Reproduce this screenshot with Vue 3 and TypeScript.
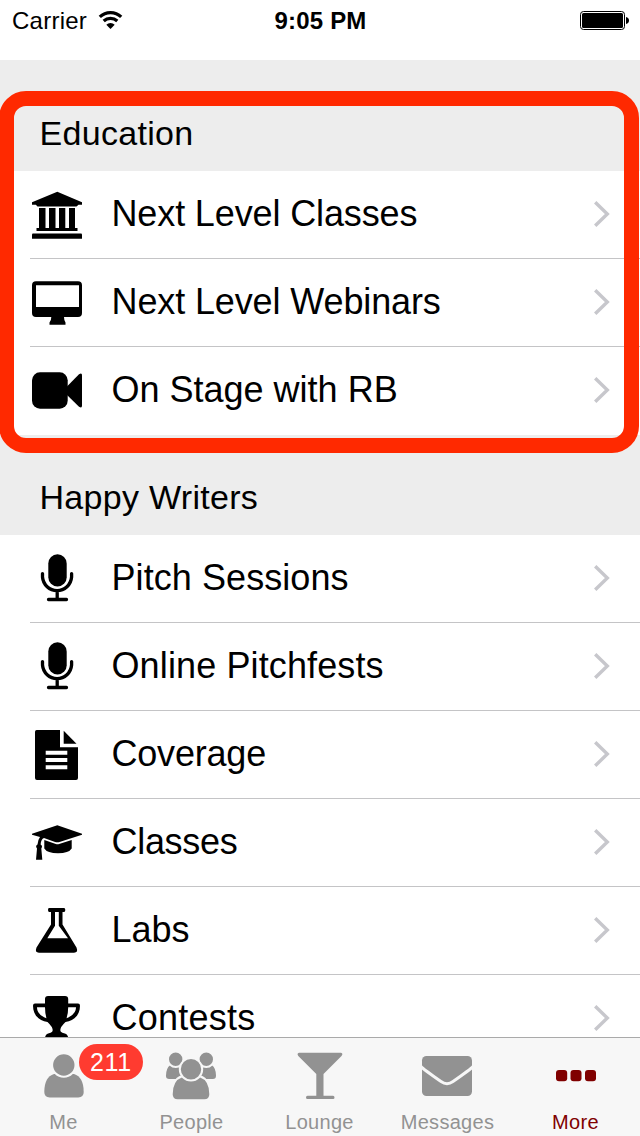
<script setup lang="ts">
interface Row { label: string; icon: string; tracking: number }
interface Section { title: string; kind: string; rows: Row[] }
interface Tab { label: string; icon: string; badge?: string; active?: boolean }

const sections: Section[] = [
  {
    title: 'Education',
    kind: 'first',
    rows: [
      { label: 'Next Level Classes', icon: 'bank', tracking: -0.13 },
      { label: 'Next Level Webinars', icon: 'monitor', tracking: -0.12 },
      { label: 'On Stage with RB', icon: 'camera', tracking: 0 },
    ],
  },
  {
    title: 'Happy Writers',
    kind: 'second',
    rows: [
      { label: 'Pitch Sessions', icon: 'mic', tracking: 0.07 },
      { label: 'Online Pitchfests', icon: 'mic', tracking: 0.12 },
      { label: 'Coverage', icon: 'doc', tracking: -0.2 },
      { label: 'Classes', icon: 'cap', tracking: -0.3 },
      { label: 'Labs', icon: 'flask', tracking: 0 },
      { label: 'Contests', icon: 'trophy', tracking: 0.25 },
    ],
  },
]

const tabs: Tab[] = [
  { label: 'Me', icon: 'me', badge: '211' },
  { label: 'People', icon: 'people' },
  { label: 'Lounge', icon: 'lounge' },
  { label: 'Messages', icon: 'messages' },
  { label: 'More', icon: 'more', active: true },
]
</script>

<template>
  <div class="screen">
    <header class="status">
      <div class="carrier">
        <span>Carrier</span>
        <svg class="wifi" width="26" height="20" viewBox="0 0 26 20">
          <g fill="none" stroke="#000" stroke-width="3.2">
            <path d="M1.800 6.900a15.400 15.400 0 0 1 21.400 0" />
            <path d="M5.700 11a10 10 0 0 1 13.600 0" />
          </g>
          <path d="M12.500 19l-4.200-4.300a6.200 6.200 0 0 1 8.400 0z" />
        </svg>
      </div>
      <div class="time">9:05 PM</div>
      <svg class="battery" width="50" height="20" viewBox="0 0 50 20">
        <rect x="0.5" y="1.5" width="44" height="18" rx="3" fill="none" stroke="#000" />
        <rect x="2" y="3" width="41" height="15" rx="1.500" />
        <path d="M46 7q3 .6 3 3.500t-3 3.500z" />
      </svg>
    </header>

    <main class="list">
      <section v-for="s in sections" :key="s.title" :class="s.kind">
        <h2>{{ s.title }}</h2>
        <ul>
          <li v-for="r in s.rows" :key="r.label">
            <svg class="icon" width="50" height="50" viewBox="0 0 50 50">
              <g v-if="r.icon === 'bank'">
                <path d="M25.300 1.700L50 12.300v2.500h-3.500L44.500 16.500H5.500L3.800 14.800H0v-2.500z" />
                <path d="M7 18h6.500v20H17V18h6.500v20H27V18h6.300v20H37V18h6v20h2.500v3h-41v-3H7z" />
                <path d="M1 43.500h48q1 0 1 1v4.200H0v-4.200q0-1 1-1z" />
              </g>
              <path v-else-if="r.icon === 'monitor'" fill-rule="evenodd" d="M4 3.300h42q4 0 4 4V35q0 4-4 4H32q0 3.500 1.500 5.500v2.200h-16v-2.200Q19.300 42.500 19.300 39H4q-4 0-4-4V7.300q0-4 4-4zM4 7.300V29h43V7.300z" />
              <g v-else-if="r.icon === 'camera'">
                <rect y="6.300" width="35.700" height="36.400" rx="8" />
                <path d="M34 21.500L47 8.300q3-2 3 1v30.400q0 3-3 1L34 28z" />
              </g>
              <g v-else-if="r.icon === 'mic'">
                <rect x="16.300" y="0.200" width="18.400" height="32.300" rx="9.200" />
                <path d="M10.500 19.600V23a14.600 14.900 0 0 0 29.100 0V19.600M25.200 38v7M16.500 45.500h18" fill="none" stroke="#000" stroke-width="3.300" stroke-linecap="round" />
              </g>
              <g v-else-if="r.icon === 'doc'">
                <path fill-rule="evenodd" d="M4.700 0H28V17.200H46V48q0 2-2 2H5q-2 0-2-2V2q0-2 1.700-2zM13.700 20.700v4h21.600v-4zM13.700 28v4h21.600v-4zM13.700 35.300v4h21.600v-4z" />
                <path d="M31.700.7L44.500 13.700H31.700z" />
              </g>
              <g v-else-if="r.icon === 'cap'">
                <path d="M25.300 7.300L50 15.800v1L27.500 24q-2.200.6-4.400 0L12 20q-3 1-3.400 6.500 2.400 1.500.7 4l1 11.200H4l1-11.200q-2-2.500.5-4 .2-4.500 2.500-7.600L0 16.800v-1z" />
                <path d="M12.300 22l11.500 4q1.700.5 3.300 0L39.700 22v8.500q-3 4.800-13.700 4.800T12.300 30.500z" />
              </g>
              <path v-else-if="r.icon === 'flask'" fill-rule="evenodd" d="M17 2h15q1.300 0 1.300 2T32 6h-1.500v12.500L44.500 41.500q2 5.200-2.500 5.200H7q-4.500 0-2.500-5.200L19 18.500V6h-1.700Q16 6 16 4t1-2zM23 6v13.800L15.300 32.300H36L26.800 19.800V6z" />
              <path v-else fill-rule="evenodd" d="M13 5q0-3 3-3h17q3.200 0 3.200 3v4.500H46q2 0 2 2.200C48 20.700 42 27 33.500 28Q28.300 33 28.300 36Q28.300 38.500 32 39.200Q36.200 40 36.200 44.500H13Q13 40 17 39.200Q20.700 38.500 20.700 36Q20.700 33 15.500 28C7 27 1 20.700 1 11.700q0-2.200 2-2.200h10zM5 13.300c0 5 3.700 9 9.500 11Q13 19.500 13 13.300zM36.200 13.300q0 6-1.700 11C40 22.300 44 18.300 44 13.300z" />
            </svg>
            <span class="label" :style="{ letterSpacing: r.tracking + 'px' }">{{ r.label }}</span>
            <svg class="chevron" width="16" height="26" viewBox="0 0 16 26">
              <path d="M1.200 1.200L13.300 13 1.200 24.800" fill="none" stroke="#c7c7cc" stroke-width="3.400" />
            </svg>
          </li>
        </ul>
      </section>
    </main>

    <div class="highlight"></div>

    <nav class="tabs">
      <div v-for="t in tabs" :key="t.label" class="tab" :class="{ active: t.active }">
        <svg width="128" height="70" viewBox="0 0 128 70" fill="currentColor">
          <g v-if="t.icon === 'me'">
            <path d="M54 36h20q9.700 3 9.700 18 0 5.400-5.400 5.400H49.700q-5.400 0-5.400-5.400Q44.300 39 54 36z" />
            <circle cx="63.800" cy="27" r="11.700" stroke="#f7f7f7" stroke-width="2" />
          </g>
          <g v-else-if="t.icon === 'people'">
            <path d="M42 27.300h42q4 3 4 10.500 0 3.200-3.200 3.200H41.200Q38 41 38 37.800q0-7.500 4-10.500z" />
            <g stroke="#f7f7f7" stroke-width="2">
              <circle cx="47.700" cy="21.300" r="7.700" />
              <circle cx="78.300" cy="21.300" r="7.700" />
              <path d="M54 38.300h18q10.300 3.500 10.300 18 0 6-6 6H49.700q-6 0-6-6 0-14.500 10.300-18z" />
              <circle cx="63" cy="31.300" r="11.200" />
            </g>
          </g>
          <path v-else-if="t.icon === 'lounge'" d="M43 14.700h42q2.500.8.500 3.200L67.500 36v21.700H77q1.500 0 1.500 1.700T77 61H51.500Q50 61 50 59.400t1.500-1.700h8.800V36L42.300 17.900q-1.800-2.400.7-3.200z" />
          <g v-else-if="t.icon === 'messages'">
            <rect x="38" y="18" width="50" height="40" rx="4.500" />
            <path d="M37 28.500Q39 31 57 43.500q6 4.300 12 0Q87 31 89 28.500" fill="none" stroke="#f7f7f7" stroke-width="2.900" />
          </g>
          <g v-else>
            <rect x="44" y="32" width="11.200" height="11.300" rx="3" />
            <rect x="58.500" y="32" width="11" height="11.300" rx="3" />
            <rect x="73" y="32" width="11" height="11.300" rx="3" />
          </g>
        </svg>
        <span class="tab-label">{{ t.label }}</span>
        <span v-if="t.badge" class="badge">{{ t.badge }}</span>
      </div>
    </nav>
  </div>
</template>

<style scoped>
.screen {
  position: relative;
  display: flex;
  flex-direction: column;
  width: 640px;
  height: 1136px;
  overflow: hidden;
  background: #fff;
  color: #000;
  font-family: "Liberation Sans", Arial, sans-serif;
}
.status {
  display: grid;
  grid-template-columns: 1fr auto 1fr;
  flex: none;
  height: 60px;
  box-sizing: border-box;
  padding: 7px 11px 0 12px;
  font-size: 24px;
  line-height: 28px;
}
.carrier { display: flex; letter-spacing: 0.25px; }
.wifi { margin: 3px 0 0 10.500px; }
.time { font-weight: 700; letter-spacing: 0.2px; }
.battery { justify-self: end; margin: 3px -1px 0 0; }
.list { flex: 1; min-height: 0; overflow: hidden; }
h2 {
  box-sizing: border-box;
  margin: 0;
  padding: 0 39.500px;
  background: #ededed;
  font-size: 34px;
  font-weight: 400;
  line-height: 40px;
}
.first h2 { height: 111px; padding-top: 53px; letter-spacing: 0.3px; }
.second h2 { height: 100px; padding-top: 42px; letter-spacing: 0.3px; }
ul { margin: 0; padding: 0; list-style: none; }
li {
  display: flex;
  align-items: center;
  height: 88px;
  box-sizing: border-box;
  padding: 0 30px 0 2px;
  margin-left: 30px;
  border-bottom: 1px solid #c4c4c6;
}
li:last-child { border-bottom-color: transparent; }
.icon { flex: none; margin-top: 1px; }
.label {
  flex: 1;
  margin: -1px 0 0 29.500px;
  font-size: 36px;
  line-height: 42px;
  white-space: nowrap;
}
.chevron { flex: none; margin-top: -1px; }
.highlight {
  position: absolute;
  left: -1px;
  top: 91px;
  width: 639.500px;
  height: 362px;
  box-sizing: border-box;
  border: 15px solid #ff2900;
  border-radius: 27px;
}
.tabs {
  display: flex;
  flex: none;
  height: 99px;
  box-sizing: border-box;
  border-top: 1px solid #aaa;
  background: #f7f7f7;
}
.tab {
  position: relative;
  display: flex;
  flex-direction: column;
  align-items: center;
  width: 128px;
  color: #929292;
}
.tab.active { color: #800000; }
.tab-label { margin: 3px 1px 0 0; font-size: 20px; line-height: 23px; letter-spacing: 0.3px; }
.badge {
  position: absolute;
  left: 79px;
  top: 6px;
  z-index: 1;
  width: 64px;
  height: 36px;
  border-radius: 18px;
  background: #ff3b30;
  color: #fff;
  font-size: 25px;
  line-height: 37px;
  letter-spacing: 0.7px;
  text-align: center;
}
</style>
